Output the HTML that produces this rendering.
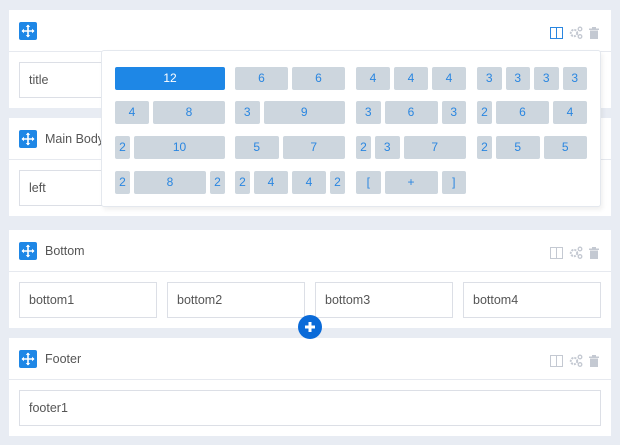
<!DOCTYPE html>
<html><head><meta charset="utf-8"><style>
*{box-sizing:border-box;margin:0;padding:0}
body{width:620px;height:445px;background:#e8ecf3;font-family:"Liberation Sans",sans-serif;position:relative;overflow:hidden}
.panel{position:absolute;left:9px;width:602px;height:98px;background:#fff}
.hd{height:42px;border-bottom:1px solid #e6e9ef;position:relative}
.mv{position:absolute;left:10px;top:12px;width:18px;height:18px;background:#1e87e6;border-radius:2px}
.mv svg{display:block}
.tt{position:absolute;left:36px;top:14px;font-size:12.5px;color:#555}
.ic{position:absolute;right:12px;top:16px;display:flex;gap:6px;align-items:center}
.inp{position:absolute;top:52px;height:36px;border:1px solid #dcdfe6;font-size:12.5px;color:#555;padding:10px 0 0 9px}
.pop{position:absolute;left:101px;top:50px;width:500px;height:157px;background:#fff;border:1px solid #e4e8ee;border-radius:3px;box-shadow:2px 3px 5px rgba(0,0,0,.06)}
.g{position:absolute;width:110px;display:grid;grid-template-columns:repeat(12,1fr);column-gap:4px;height:23px}
.g span{background:#cdd6de;border-radius:2px;color:#2a86e0;font-size:12px;text-align:center;line-height:23px}
.g span.a{background:#1e87e6;color:#fff}
.plus{position:absolute;left:298px;top:315px;width:24px;height:24px;border-radius:50%;background:#0a6ad8}
</style></head><body>
<div class="panel" style="top:10px"><div class="hd"><div class="mv"><svg width="18" height="18" viewBox="0 0 18 18"><path d="M9 3v12M3 9h12" stroke="#fff" stroke-width="1.6"/><path d="M9 2.5l2.2 2.5h-4.4zM9 15.5l2.2-2.5h-4.4zM2.5 9l2.5-2.2v4.4zM15.5 9l-2.5-2.2v4.4z" fill="#fff"/></svg></div>
<div class="ic"><svg width="13" height="12"><rect x=".5" y=".5" width="12" height="11" fill="none" stroke="#2a86e0"/><path d="M6.5 0v12" stroke="#2a86e0"/></svg><svg width="14" height="13"><circle cx="5" cy="7" r="3.2" fill="none" stroke="#c4c9d2" stroke-width="2" stroke-dasharray="2 1"/><circle cx="11" cy="3" r="1.8" fill="none" stroke="#c4c9d2" stroke-width="1.3"/><circle cx="11" cy="10.5" r="1.8" fill="none" stroke="#c4c9d2" stroke-width="1.3"/></svg><svg width="10" height="12"><rect x="0" y="1.5" width="10" height="1.5" fill="#c4c9d2"/><rect x="3" y="0" width="4" height="2" fill="#c4c9d2"/><rect x="1" y="3.5" width="8" height="8.5" fill="#c4c9d2"/></svg></div></div>
<div class="inp" style="left:10px;width:110px">title</div></div>

<div class="panel" style="top:118px"><div class="hd"><div class="mv"><svg width="18" height="18" viewBox="0 0 18 18"><path d="M9 3v12M3 9h12" stroke="#fff" stroke-width="1.6"/><path d="M9 2.5l2.2 2.5h-4.4zM9 15.5l2.2-2.5h-4.4zM2.5 9l2.5-2.2v4.4zM15.5 9l-2.5-2.2v4.4z" fill="#fff"/></svg></div><div class="tt">Main Body</div></div>
<div class="inp" style="left:10px;width:110px">left</div></div>

<div class="panel" style="top:230px"><div class="hd"><div class="mv"><svg width="18" height="18" viewBox="0 0 18 18"><path d="M9 3v12M3 9h12" stroke="#fff" stroke-width="1.6"/><path d="M9 2.5l2.2 2.5h-4.4zM9 15.5l2.2-2.5h-4.4zM2.5 9l2.5-2.2v4.4zM15.5 9l-2.5-2.2v4.4z" fill="#fff"/></svg></div><div class="tt">Bottom</div>
<div class="ic"><svg width="13" height="12"><rect x=".5" y=".5" width="12" height="11" fill="none" stroke="#c4c9d2"/><path d="M6.5 0v12" stroke="#c4c9d2"/></svg><svg width="14" height="13"><circle cx="5" cy="7" r="3.2" fill="none" stroke="#c4c9d2" stroke-width="2" stroke-dasharray="2 1"/><circle cx="11" cy="3" r="1.8" fill="none" stroke="#c4c9d2" stroke-width="1.3"/><circle cx="11" cy="10.5" r="1.8" fill="none" stroke="#c4c9d2" stroke-width="1.3"/></svg><svg width="10" height="12"><rect x="0" y="1.5" width="10" height="1.5" fill="#c4c9d2"/><rect x="3" y="0" width="4" height="2" fill="#c4c9d2"/><rect x="1" y="3.5" width="8" height="8.5" fill="#c4c9d2"/></svg></div></div>
<div class="inp" style="left:10px;width:138px">bottom1</div><div class="inp" style="left:158px;width:138px">bottom2</div><div class="inp" style="left:306px;width:138px">bottom3</div><div class="inp" style="left:454px;width:138px">bottom4</div></div>

<div class="panel" style="top:338px"><div class="hd"><div class="mv"><svg width="18" height="18" viewBox="0 0 18 18"><path d="M9 3v12M3 9h12" stroke="#fff" stroke-width="1.6"/><path d="M9 2.5l2.2 2.5h-4.4zM9 15.5l2.2-2.5h-4.4zM2.5 9l2.5-2.2v4.4zM15.5 9l-2.5-2.2v4.4z" fill="#fff"/></svg></div><div class="tt">Footer</div>
<div class="ic"><svg width="13" height="12"><rect x=".5" y=".5" width="12" height="11" fill="none" stroke="#c4c9d2"/><path d="M6.5 0v12" stroke="#c4c9d2"/></svg><svg width="14" height="13"><circle cx="5" cy="7" r="3.2" fill="none" stroke="#c4c9d2" stroke-width="2" stroke-dasharray="2 1"/><circle cx="11" cy="3" r="1.8" fill="none" stroke="#c4c9d2" stroke-width="1.3"/><circle cx="11" cy="10.5" r="1.8" fill="none" stroke="#c4c9d2" stroke-width="1.3"/></svg><svg width="10" height="12"><rect x="0" y="1.5" width="10" height="1.5" fill="#c4c9d2"/><rect x="3" y="0" width="4" height="2" fill="#c4c9d2"/><rect x="1" y="3.5" width="8" height="8.5" fill="#c4c9d2"/></svg></div></div>
<div class="inp" style="left:10px;width:582px">footer1</div></div>

<div class="plus"><svg width="24" height="24"><path d="M12 7v10M7 12h10" stroke="#fff" stroke-width="3"/></svg></div>

<div class="pop">
<div class="g" style="left:13px;top:16px"><span class="a" style="grid-column:span 12">12</span></div>
<div class="g" style="left:133px;top:16px"><span style="grid-column:span 6">6</span><span style="grid-column:span 6">6</span></div>
<div class="g" style="left:254px;top:16px"><span style="grid-column:span 4">4</span><span style="grid-column:span 4">4</span><span style="grid-column:span 4">4</span></div>
<div class="g" style="left:375px;top:16px"><span style="grid-column:span 3">3</span><span style="grid-column:span 3">3</span><span style="grid-column:span 3">3</span><span style="grid-column:span 3">3</span></div>

<div class="g" style="left:13px;top:50px"><span style="grid-column:span 4">4</span><span style="grid-column:span 8">8</span></div>
<div class="g" style="left:133px;top:50px"><span style="grid-column:span 3">3</span><span style="grid-column:span 9">9</span></div>
<div class="g" style="left:254px;top:50px"><span style="grid-column:span 3">3</span><span style="grid-column:span 6">6</span><span style="grid-column:span 3">3</span></div>
<div class="g" style="left:375px;top:50px"><span style="grid-column:span 2">2</span><span style="grid-column:span 6">6</span><span style="grid-column:span 4">4</span></div>

<div class="g" style="left:13px;top:85px"><span style="grid-column:span 2">2</span><span style="grid-column:span 10">10</span></div>
<div class="g" style="left:133px;top:85px"><span style="grid-column:span 5">5</span><span style="grid-column:span 7">7</span></div>
<div class="g" style="left:254px;top:85px"><span style="grid-column:span 2">2</span><span style="grid-column:span 3">3</span><span style="grid-column:span 7">7</span></div>
<div class="g" style="left:375px;top:85px"><span style="grid-column:span 2">2</span><span style="grid-column:span 5">5</span><span style="grid-column:span 5">5</span></div>

<div class="g" style="left:13px;top:120px"><span style="grid-column:span 2">2</span><span style="grid-column:span 8">8</span><span style="grid-column:span 2">2</span></div>
<div class="g" style="left:133px;top:120px"><span style="grid-column:span 2">2</span><span style="grid-column:span 4">4</span><span style="grid-column:span 4">4</span><span style="grid-column:span 2">2</span></div>
<div class="g" style="left:254px;top:120px"><span style="grid-column:span 3">[</span><span style="grid-column:span 6">+</span><span style="grid-column:span 3">]</span></div>
</div>
</body></html>
